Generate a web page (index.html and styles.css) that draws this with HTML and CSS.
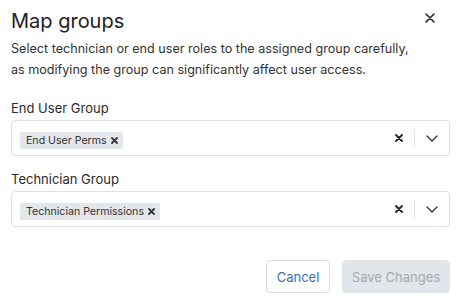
FILE: index.html
```html
<!DOCTYPE html>
<html>
<head>
<meta charset="utf-8">
<link rel="stylesheet" href="styles.css">
</head>
<body>
<div class="dialog">
  <div class="header">
    <h1 class="title">Map groups</h1>
    <button class="close" aria-label="Close">
      <svg width="10" height="10" viewBox="0 0 10 10"><path d="M1 1L9 9M9 1L1 9" stroke="#222" stroke-width="1.6" stroke-linecap="round"/></svg>
    </button>
  </div>
  <p class="desc">Select technician or end user roles to the assigned group carefully,<br>as modifying the group can significantly affect user access.</p>

  <div class="field">
    <label class="label">End User Group</label>
    <div class="select">
      <div class="values">
        <span class="tag">End User Perms <svg class="tagx" width="7" height="7" viewBox="0 0 7 7"><path d="M1 1L6 6M6 1L1 6" stroke="#333" stroke-width="1.8" stroke-linecap="round"/></svg></span>
      </div>
      <div class="indicators">
        <svg class="clear" width="8" height="8" viewBox="0 0 8 8"><path d="M1 1L7 7M7 1L1 7" stroke="#222" stroke-width="1.8" stroke-linecap="round"/></svg>
        <span class="sep"></span>
        <svg class="chev" width="12" height="7" viewBox="0 0 12 7"><path d="M1 1L6 6L11 1" fill="none" stroke="#333" stroke-width="1.4" stroke-linecap="round" stroke-linejoin="round"/></svg>
      </div>
    </div>
  </div>

  <div class="field">
    <label class="label">Technician Group</label>
    <div class="select">
      <div class="values">
        <span class="tag">Technician Permissions <svg class="tagx" width="7" height="7" viewBox="0 0 7 7"><path d="M1 1L6 6M6 1L1 6" stroke="#333" stroke-width="1.8" stroke-linecap="round"/></svg></span>
      </div>
      <div class="indicators">
        <svg class="clear" width="8" height="8" viewBox="0 0 8 8"><path d="M1 1L7 7M7 1L1 7" stroke="#222" stroke-width="1.8" stroke-linecap="round"/></svg>
        <span class="sep"></span>
        <svg class="chev" width="12" height="7" viewBox="0 0 12 7"><path d="M1 1L6 6L11 1" fill="none" stroke="#333" stroke-width="1.4" stroke-linecap="round" stroke-linejoin="round"/></svg>
      </div>
    </div>
  </div>

  <div class="footer">
    <button class="btn cancel">Cancel</button>
    <button class="btn save" disabled>Save Changes</button>
  </div>
</div>
</body>
</html>
```
FILE: styles.css
```css
* { box-sizing: border-box; }
html, body { margin: 0; padding: 0; background: #fff; }
body {
  font-family: Inter, "Liberation Sans", sans-serif;
  color: #2b2b2b;
  width: 458px;
  height: 302px;
  overflow: hidden;
}
.dialog {
  padding: 8px 8px 0 11px;
}
.header {
  display: flex;
  justify-content: space-between;
  align-items: center;
  height: 26px;
}
.title {
  margin: 0;
  font-size: 20px;
  font-weight: 400;
  line-height: 26px;
  color: #222;
}
.close {
  border: 0;
  background: none;
  padding: 0;
  margin-right: 15px;
  display: flex;
  margin-top: -6px;
}
.desc {
  margin: 4px 0 0;
  font-size: 12.6px;
  line-height: 21px;
  color: #333;
}
.field {
  margin-top: 18px;
}
.field + .field { margin-top: 13px; }
.label {
  display: block;
  font-size: 13px;
  line-height: 20px;
  color: #2b2b2b;
  margin-bottom: 2px;
}
.select {
  width: 439px;
  height: 36px;
  border: 1px solid #dcdfe3;
  border-radius: 4px;
  display: flex;
  align-items: center;
  justify-content: space-between;
  padding-left: 8px;
}
.tag {
  display: inline-flex;
  align-items: center;
  gap: 4px;
  height: 17px;
  padding: 0 5px 0 6px;
  background: #e3e6ea;
  border-radius: 2px;
  font-size: 10.6px;
  color: #333;
}
.indicators {
  display: flex;
  align-items: center;
  height: 100%;
}
.clear { margin-right: 11px; }
.sep {
  width: 1px;
  height: 19px;
  background: #e3e5e8;
}
.chev { margin: 0 11px 0 11px; }
.footer {
  display: flex;
  justify-content: flex-end;
  gap: 12px;
  margin-top: 33px;
}
.btn {
  height: 33px;
  border-radius: 4px;
  font-family: Inter, "Liberation Sans", sans-serif;
  font-size: 13px;
  padding: 0;
  white-space: nowrap;
}
.cancel {
  background: #fff;
  border: 1px solid #d9dde2;
  color: #3674b5;
  width: 64px;
}
.save {
  background: #e2e5e9;
  border: 1px solid #e2e5e9;
  color: #a3a9b2;
  width: 108px;
}
```
